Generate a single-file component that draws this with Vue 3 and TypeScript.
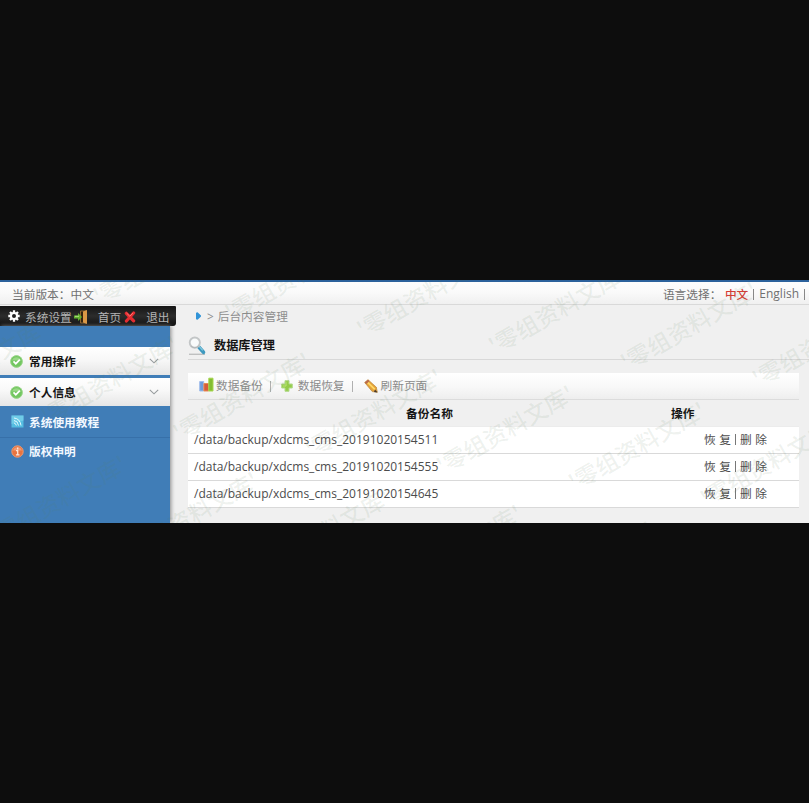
<script setup lang="ts">
interface Backup {
  path: string
}

const backups: Backup[] = [
  { path: '/data/backup/xdcms_cms_20191020154511' },
  { path: '/data/backup/xdcms_cms_20191020154555' },
  { path: '/data/backup/xdcms_cms_20191020154645' },
]

const panels: string[] = ['常用操作', '个人信息']

// Baseline start of each diagonal watermark, relative to the panel
const marks: [number, number][] = []
const rows: [number, number, number][] = [
  [-42, 0, 7],
  [-94, 120, 7],
  [-14, 256, 5],
]
for (const [x, y, n] of rows) {
  for (let i = 0; i < n; i++) marks.push([x + i * 131.8, y + i * 16.5])
}
</script>

<template>
  <div class="page">
    <div class="screen">
      <header class="top">
        <span>当前版本：中文</span>
        <div class="lang">
          <span class="label">语言选择：</span><b>中文</b><i class="sep"></i><span class="latin">English</span><i class="sep last"></i>
        </div>
      </header>
      <div class="body">
        <aside class="side">
          <nav class="dark">
            <svg class="gear" width="12" height="12" viewBox="0 0 12 12">
              <g stroke="#fff" stroke-width="2.3">
                <path d="M6 .3v11.4M.3 6h11.4M2 2l8 8M10 2l-8 8" />
              </g>
              <circle cx="6" cy="6" r="4.1" fill="#fff" />
              <circle cx="6" cy="6" r="2" fill="#222" />
            </svg>
            <span class="set">系统设置</span>
            <svg class="door" width="14" height="14" viewBox="0 0 14 14">
              <path d="M6.5 1h6v12h-6z" fill="#33230f" stroke="#8e642d" />
              <path d="M9 1.5L13 0v14l-4-1.5z" fill="#dc9845" />
              <path d="M0 5.5h4V3l4 4-4 4V8.500H0z" fill="#63b32f" />
              <path d="M1 6.300h4" stroke="#b1e487" />
            </svg>
            <span class="home">首页</span>
            <svg class="cross" width="12" height="12" viewBox="0 0 12 12">
              <path d="M2.3 2.3l7.3 7.6M9.6 2L2.4 10" stroke="#e32c30" stroke-width="3.2" stroke-linecap="round" />
              <path d="M2.5 2l3.3 3.2L9.2 1.9" stroke="#ff7773" fill="none" />
            </svg>
            <span class="quit">退出</span>
          </nav>
          <div class="menu">
            <div v-for="name in panels" :key="name" class="panel">
              <svg class="ico" width="13" height="13" viewBox="0 0 13 13">
                <circle cx="6.5" cy="6.5" r="5.9" fill="#72c660" stroke="#9bd78a" />
                <path d="M2 5.5a4.7 4.7 0 0 1 9 0z" fill="#a8e095" opacity=".7" />
                <path d="M3.5 6.4l2.3 2.3 4-4" stroke="#fff" stroke-width="1.7" fill="none" />
              </svg>
              <b>{{ name }}</b>
              <svg class="chev" width="10" height="6" viewBox="0 0 10 6">
                <path d="M.8.8L5 4.8 9.2.8" fill="none" stroke="#969b9d" stroke-width="1.1" />
              </svg>
            </div>
            <div class="link first">
              <svg class="ico" width="13" height="13" viewBox="0 0 13 13">
                <path d="M.5.5h12v12H.5z" fill="#54bde1" />
                <path d="M.5.5h12v5L.5 9z" fill="#83d6ed" opacity=".6" />
                <path d="M3 3q6 .5 7 7.5M3 5.5q4 .5 4.5 5M3 8q2 .3 2.3 2.5" fill="none" stroke="#e0f9ff" />
              </svg>
              <b>系统使用教程</b>
            </div>
            <div class="link">
              <svg class="ico" width="13" height="13" viewBox="0 0 13 13">
                <circle cx="6.5" cy="6.5" r="5.7" fill="#e8743f" stroke="#ef9b72" />
                <path d="M2 5.5a4.7 4.7 0 0 1 9 0z" fill="#f6b493" opacity=".6" />
                <path d="M6.7 2.6v1.8M5 5.7h1.7v4M4.9 9.8h3.6" fill="none" stroke="#fde6d9" stroke-width="1.3" />
              </svg>
              <b>版权申明</b>
            </div>
          </div>
        </aside>
        <main class="main">
          <div class="crumb">
            <svg width="5" height="8" viewBox="0 0 5 8"><path d="M0 .8l1.6-.6L5 3.6v.8L1.6 7.8 0 7.2z" fill="#3194d8" /></svg>
            <span class="gt">&gt;</span><span>后台内容管理</span>
          </div>
          <h1 class="title">
            <svg width="19" height="20" viewBox="0 0 19 20">
              <path d="M1 18.3h16" stroke="#bfc0c0" stroke-width="1.4" />
              <path d="M10.8 11l4.7 5.3" stroke="#3e99bf" stroke-width="3.6" stroke-linecap="round" />
              <path d="M10.9 10.2l3.8 4.2" stroke="#86cbe0" stroke-width="1.2" />
              <circle cx="6.8" cy="6.6" r="5.1" fill="#f9fbfb" stroke="#c3c6c7" stroke-width="1.9" />
              <path d="M3 10a5.1 5.1 0 0 0 7.5.1" stroke="#b3b8ba" fill="none" />
            </svg>
            <span>数据库管理</span>
          </h1>
          <div class="tools">
            <svg class="t1" width="15" height="15" viewBox="0 0 15 15">
              <path d="M.7 4.5h4V14h-4z" fill="#6e9cdc" stroke="#a1bdeb" />
              <path d="M4.9 6.5h4.8V14H4.9z" fill="#d65b3b" stroke="#e68b54" />
              <path d="M9.8 1.2H14V14H9.8z" fill="#83bd31" stroke="#a6d64e" />
            </svg>
            <span>数据备份</span><i class="bar b1"></i>
            <svg class="t2" width="12" height="12" viewBox="0 0 12 12">
              <path d="M4 .7h4V4h3.3v4H8v3.3H4V8H.7V4H4z" fill="#94cc4a" stroke="#b2d98b" />
              <path d="M5 2v4H2" stroke="#b9e374" fill="none" />
            </svg>
            <span>数据恢复</span><i class="bar b2"></i>
            <svg class="t3" width="14" height="14" viewBox="0 0 14 14">
              <path d="M.7 3.5L4 .7l8.3 7.500 1 5-5-.6z" fill="#e5a338" stroke="#b98234" stroke-width=".7" />
              <path d="M3.6 3.4l7.2 7" stroke="#ffd868" stroke-width="1.7" />
              <path d="M.7 3.5L4 .7l1.5 1.4-3.2 3z" fill="#b9694e" />
              <path d="M11 10.5l2.6 3-3.6-.6z" fill="#47382b" />
            </svg>
            <span>刷新页面</span>
          </div>
          <div class="table">
            <div class="tr th"><b class="c1">备份名称</b><b class="c2">操作</b></div>
            <div v-for="b in backups" :key="b.path" class="tr td">
              <span class="path">{{ b.path }}</span>
              <span class="ops"><span>恢 复</span><i></i><span>删 除</span></span>
            </div>
          </div>
        </main>
      </div>
      <svg class="marks" width="809" height="243" viewBox="0 0 809 243">
        <text v-for="([x, y], i) in marks" :key="i" :transform="`translate(${x} ${y}) rotate(-29.6)`" x="4" y="13">'零组资料文库'</text>
      </svg>
    </div>
  </div>
</template>

<style>
body { background: #0d0d0d; }
</style>

<style scoped>
.page {
  height: 803px;
  padding-top: 280px;
  box-sizing: border-box;
  overflow: hidden;
  background: #0d0d0d;
  font-family: "Noto Sans CJK SC", sans-serif;
  font-size: 11.7px;
  color: #707070;
  white-space: nowrap;
}
.screen {
  position: relative;
  height: 243px;
  overflow: hidden;
  background: #f0f0f0;
  display: flex;
  flex-direction: column;
}
svg { display: block; flex: none; }
.top {
  height: 25px;
  box-sizing: border-box;
  border-top: 2px solid #2c629c;
  border-bottom: 1px solid #d9d9d9;
  background: linear-gradient(#fdfdfd, #fafafa 45%, #f0f0f0);
  display: flex;
  justify-content: space-between;
  padding: 0 4px 0 12px;
  line-height: 23px;
}
.lang { display: flex; align-items: center; }
.lang .label { width: 62px; }
.lang b { color: #d63c35; font-weight: 500; }
.sep { width: 1px; height: 11px; background: #888; margin: 2px 5px 0; }
.last { margin-right: 0; }
.latin { font-family: "Open Sans", "Noto Sans", sans-serif; font-size: 12px; padding-top: 1px; }
.body { flex: 1; display: flex; }
.side { width: 176px; flex: none; display: flex; flex-direction: column; padding-top: 1px; }
.dark {
  height: 20px;
  border-radius: 0 1px 3px 0;
  background: linear-gradient(#151515, #2c2c2c 50%, #101010);
  color: #b4b4b4;
  display: flex;
  align-items: center;
  line-height: 20px;
  padding-left: 8px;
}
.dark span { padding-top: 2px; }
.gear { margin-right: 5px; }
.door { margin: 1px 10px 0 2px; }
.cross { margin: 2px 10px 0 3px; }
.menu {
  flex: 1;
  width: 170px;
  background: #407db7;
  box-shadow: 1px 0 4px #888;
  padding-top: 21px;
  box-sizing: border-box;
}
.panel {
  height: 28px;
  margin-bottom: 3px;
  background: linear-gradient(#fff, #f8f8f8 45%, #e6e6e6);
  color: #151515;
  display: flex;
  align-items: center;
  padding: 0 11px 0 10px;
}
.panel b { line-height: 20px; }
.link b { line-height: 20px; margin-top: -2px; }
.ico { margin-right: 6px; }
.link .ico { margin-top: -3px; }
.chev { margin-left: auto; }
.link {
  height: 29px;
  color: #f2f8ff;
  display: flex;
  align-items: center;
  padding-left: 11px;
  box-sizing: border-box;
}
.link:last-child b { margin-top: -4px; }
.link .ico { margin-right: 5px; }
.first { border-bottom: 1px solid #3770a9; }
.main { flex: 1; padding: 0 10px 0 12px; }
.crumb {
  height: 23px;
  display: flex;
  align-items: center;
  padding-left: 8px;
  color: #8e8e8e;
  line-height: 17px;
}
.crumb svg { margin-top: -1px; }
.crumb span { margin-top: -2px; }
.crumb .gt { font-family: "Open Sans", sans-serif; margin: 0 4px 0 6px; }
.title {
  height: 32px;
  margin: 0 -10px 0 0;
  border-bottom: 1px solid #d8d8d8;
  box-sizing: border-box;
  display: flex;
  align-items: center;
  gap: 7px;
  font-size: 12.2px;
  color: #151515;
}
.title svg { margin-top: 4px; }
.title span { margin-top: 2px; }
.tools {
  margin-top: 13px;
  height: 27px;
  box-sizing: border-box;
  border-bottom: 1px solid #dcdcdc;
  background: linear-gradient(#fff, #f9f9f9 50%, #eee);
  display: flex;
  align-items: center;
  color: #8b8b8b;
  padding-left: 11px;
}
.tools span { margin-top: -3px; }
.t1 { margin: -3px 2px 0 0; }
.t2 { margin-right: 5px; }
.t3 { margin-right: 3px; }
.bar { width: 1px; height: 11px; background: #b0b0b0; margin: 0 10px 0 7px; }
.b2 { margin-right: 11px; }
.tr { height: 27px; box-sizing: border-box; display: flex; align-items: center; }
.th { color: #151515; border-bottom: 1px solid #ececec; }
.th b { margin-top: -2px; }
.c1 { width: 483px; text-align: center; }
.td {
  background: #fff;
  border-bottom: 1px solid #d9d9d9;
  justify-content: space-between;
  padding: 0 32px 0 6px;
  color: #4c4c4c;
}
.path { font-family: "Open Sans", "Noto Sans", sans-serif; font-size: 12px; line-height: 17px; margin-top: -1px; }
.ops { display: flex; align-items: center; gap: 4px; margin-top: -3px; word-spacing: 1px; }
.ops i { width: 1px; height: 11px; background: #777; margin-top: 2px; }
.marks { position: absolute; left: 0; top: 0; pointer-events: none; }
.marks text { font-size: 23px; font-weight: 500; letter-spacing: .2px; fill: #587d58; fill-opacity: .1; }
</style>
